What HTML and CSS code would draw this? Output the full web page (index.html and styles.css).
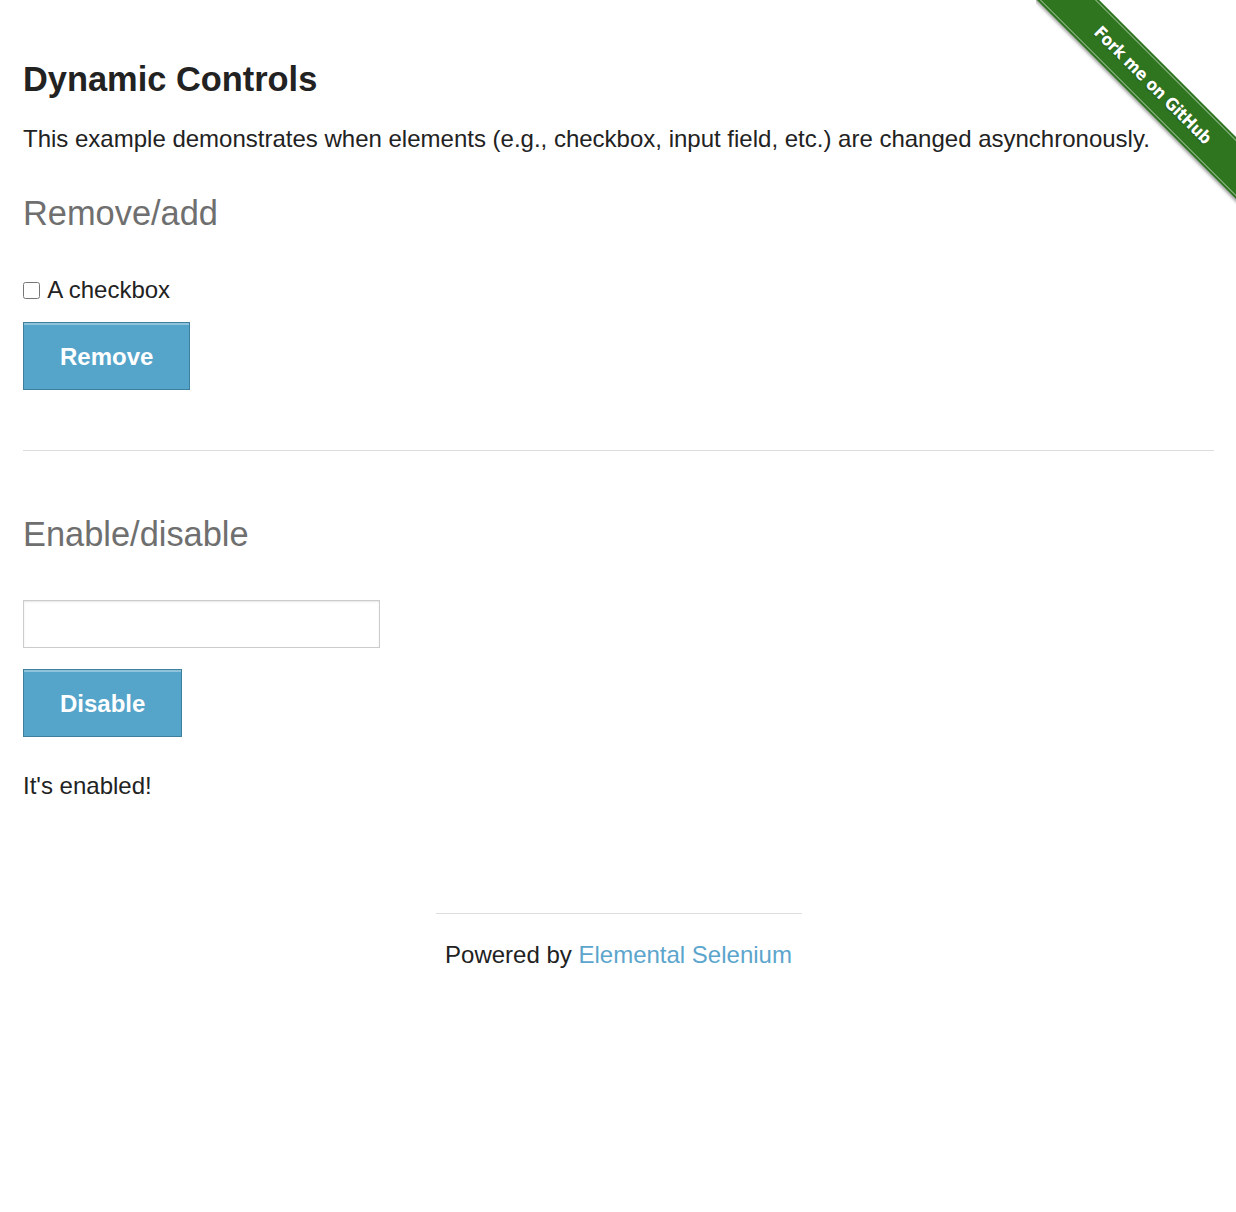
FILE: index.html
```html
<!DOCTYPE html>
<html lang="en">
<head>
<meta charset="utf-8">
<title>The Internet</title>
<link rel="stylesheet" href="styles.css">
</head>
<body>
<div class="ribbon-wrap">
  <a class="ribbon" href="#">Fork me on GitHub</a>
</div>
<div class="page">
  <div class="example">
    <h3 class="title">Dynamic Controls</h3>
    <p class="intro">This example demonstrates when elements (e.g., checkbox, input field, etc.) are changed asynchronously.</p>

    <h4 class="subtitle subtitle-first">Remove/add</h4>
    <form class="form-remove">
      <div class="checkbox-line"><input class="checkbox" type="checkbox"> A checkbox</div>
      <button class="btn btn-remove" type="button">Remove</button>
    </form>

    <hr class="divider">

    <h4 class="subtitle subtitle-second">Enable/disable</h4>
    <form class="form-enable">
      <input class="text-input" type="text">
      <button class="btn btn-disable" type="button">Disable</button>
    </form>
    <p class="message">It's enabled!</p>
  </div>

  <footer class="footer">
    <hr class="footer-rule">
    <div class="powered">Powered by <a class="powered-link" href="#">Elemental Selenium</a></div>
  </footer>
</div>
</body>
</html>
```

FILE: styles.css
```css
html, body {
  margin: 0;
  padding: 0;
  background: #ffffff;
}

body {
  font-family: "Liberation Sans", Arial, sans-serif;
  font-size: 24px;
  line-height: 30px;
  color: #222222;
  position: relative;
  min-height: 1212px;
}

.page {
  padding: 0 22px 0 23px;
}

.title {
  margin: 59px 0 0 0;
  font-size: 34.4px;
  line-height: 40px;
  font-weight: bold;
  color: #222222;
}

.intro {
  margin: 25px 0 0 0;
}

.subtitle {
  margin: 0;
  font-size: 34.4px;
  line-height: 40px;
  font-weight: normal;
  color: #6f6f6f;
}

.subtitle-first {
  margin-top: 39px;
}

.subtitle-second {
  margin-top: 63px;
}

.form-remove,
.form-enable {
  margin: 0;
  display: flex;
  flex-direction: column;
  align-items: flex-start;
}

.checkbox-line {
  margin-top: 42px;
  display: flex;
  align-items: center;
  height: 30px;
  white-space: pre;
}

.checkbox {
  width: 17px;
  height: 17px;
  margin: 0 2px 0 0;
}

.btn {
  font-family: "Liberation Sans", Arial, sans-serif;
  font-size: 24px;
  font-weight: bold;
  color: #ffffff;
  background: #55a4ca;
  border: 1px solid #3e7f9d;
  box-shadow: inset 0 2px 0 #8fc3dc;
  height: 68px;
  padding: 2px 36px 0 36px;
  margin: 0;
  cursor: pointer;
}

.btn-remove {
  margin-top: 17px;
}

.divider {
  margin: 60px 0 0 0;
  border: 0;
  border-top: 1px solid #dddddd;
  height: 0;
}

.text-input {
  margin-top: 46px;
  width: 357px;
  height: 48px;
  box-sizing: border-box;
  border: 1px solid #cccccc;
  box-shadow: inset 0 1px 2px rgba(0, 0, 0, 0.1);
  padding: 0 8px;
  font-family: "Liberation Sans", Arial, sans-serif;
  font-size: 24px;
}

.btn-disable {
  margin-top: 21px;
}

.message {
  margin: 34px 0 0 0;
}

.footer {
  display: flex;
  flex-direction: column;
  align-items: center;
  margin-top: 112px;
}

.footer-rule {
  width: 366px;
  margin: 0;
  border: 0;
  border-top: 1px solid #dddddd;
  height: 0;
}

.powered {
  margin-top: 26px;
}

.powered-link {
  color: #5ca5cc;
  text-decoration: none;
}

/* Fork ribbon */
.ribbon-wrap {
  position: absolute;
  top: 0;
  right: 0;
  width: 200px;
  height: 212px;
  overflow: hidden;
}

.ribbon {
  position: absolute;
  left: -33px;
  top: 63px;
  width: 300px;
  height: 44px;
  transform: rotate(45deg);
  background: #2f7520;
  box-shadow: 0 2px 3px rgba(0, 0, 0, 0.35);
  color: #ffffff;
  text-decoration: none;
  font-family: "DejaVu Sans Condensed", "DejaVu Sans", sans-serif;
  font-weight: bold;
  font-size: 17px;
  letter-spacing: -0.2px;
  display: flex;
  align-items: center;
  justify-content: center;
  text-shadow: 0 1px 1px rgba(0, 0, 0, 0.3);
}

.ribbon::before {
  content: "";
  position: absolute;
  left: 0;
  right: 0;
  top: 2px;
  bottom: 2px;
  border-top: 1px solid rgba(255, 255, 255, 0.45);
  border-bottom: 1px solid rgba(255, 255, 255, 0.45);
}
```
